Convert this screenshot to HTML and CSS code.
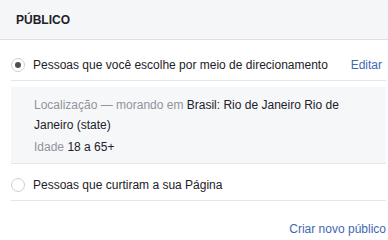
FILE: index.html
```html
<!DOCTYPE html>
<html lang="pt-BR">
<head>
    <meta charset="UTF-8">
    <meta name="viewport" content="width=device-width, initial-scale=1.0">
    <title>Público</title>
    <link rel="stylesheet" href="styles.css">
</head>
<body>
    <div class="panel-header">PÚBLICO</div>

    <div class="panel-body">
        <div class="option option-selected">
            <span class="radio checked"></span>
            <span class="option-label">Pessoas que você escolhe por meio de direcionamento</span>
            <a class="link edit-link" href="#">Editar</a>
        </div>

        <div class="targeting">
            <div class="targeting-line">
                <span class="muted">Localização — morando em</span> <span>Brasil: Rio de Janeiro Rio de Janeiro (state)</span>
            </div>
            <div class="targeting-line age-line">
                <span class="muted">Idade</span> <span>18 a 65+</span>
            </div>
        </div>

        <div class="option">
            <span class="radio"></span>
            <span class="option-label">Pessoas que curtiram a sua Página</span>
        </div>

        <div class="panel-footer">
            <a class="link" href="#">Criar novo público</a>
        </div>
    </div>
</body>
</html>
```

FILE: styles.css
```css
* {
    box-sizing: border-box;
    margin: 0;
    padding: 0;
}

body {
    width: 388px;
    height: 240px;
    font-family: "Liberation Sans", Arial, sans-serif;
    font-size: 12px;
    line-height: 16px;
    color: #1d2129;
    background-color: #ffffff;
    overflow: hidden;
}

/* cabeçalho */
.panel-header {
    height: 40px;
    padding-left: 16px;
    display: flex;
    align-items: center;
    font-weight: bold;
    background-color: #f5f6f7;
    border-bottom: 1px solid #dddfe2;
}

.panel-body {
    margin: 0 2px 0 11px;
}

/* opções de rádio */
.option {
    display: flex;
    align-items: center;
    gap: 8px;
    padding: 13px 0 7px;
    border-bottom: 1px solid #e5e6e9;
}

.option-selected {
    padding-top: 17px;
    margin-bottom: 6px;
}

.option-label {
    flex-grow: 1;
}

.radio {
    width: 14px;
    height: 14px;
    flex-shrink: 0;
    border-radius: 50%;
    border: 1px solid #ccd0d5;
    background-color: #ffffff;
    display: flex;
    align-items: center;
    justify-content: center;
}

.radio.checked::after {
    content: "";
    width: 6px;
    height: 6px;
    border-radius: 50%;
    background-color: #4b4f56;
}

.link {
    color: #4267b2;
    text-decoration: none;
}

.edit-link {
    margin-right: 4px;
}

/* detalhes do direcionamento */
.targeting {
    background-color: #f6f7f9;
    padding: 8px 20px 6px 23px;
    line-height: 20px;
    border-bottom: 1px solid #e5e6e9;
}

.age-line {
    margin-top: 2px;
}

.muted {
    color: #90949c;
}

.panel-footer {
    display: flex;
    justify-content: flex-end;
    padding-top: 20px;
}
```
